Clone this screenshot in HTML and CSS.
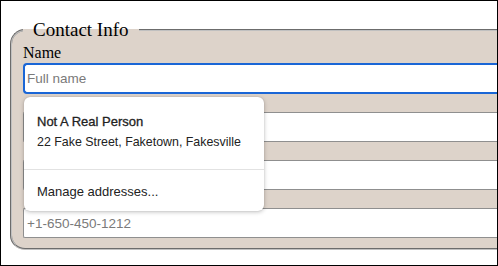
FILE: index.html
```html
<!DOCTYPE html>
<html>
<head>
<meta charset="utf-8">
<link rel="stylesheet" href="styles.css">
</head>
<body>
<div class="frame">
  <form class="form">
    <fieldset class="contact">
      <legend class="legend">Contact Info</legend>
      <label class="lbl" for="name">Name</label>
      <input class="field focused" id="name" type="text" placeholder="Full name">
      <input class="field gap" id="addr" type="text" aria-label="Address">
      <input class="field gap" id="email" type="text" aria-label="Email">
      <input class="field gap" id="phone" type="text" aria-label="Phone" placeholder="+1-650-450-1212">
    </fieldset>
  </form>
  <div class="menu">
    <div class="entry">
      <div class="entry-title">Not A Real Person</div>
      <div class="entry-sub">22 Fake Street, Faketown, Fakesville</div>
    </div>
    <div class="manage">Manage addresses...</div>
  </div>
</div>
</body>
</html>
```
FILE: styles.css
```css
html, body {
  margin: 0;
  padding: 0;
  background: #fff;
}
.frame {
  position: relative;
  width: 498px;
  height: 266px;
  box-sizing: border-box;
  border: 1px solid #000;
  overflow: hidden;
  background: #fff;
}
.form {
  margin: 0;
}
.contact {
  margin: 17px 0 0 9px;
  min-width: 0;
  padding: 5px 0 10px 11px;
  border: 2px groove #c0c0c0;
  border-right: 0;
  border-radius: 15px 0 0 15px;
  background: #ddd3ca;
  font-family: "Liberation Serif", serif;
  font-size: 16px;
}
.legend {
  font-family: "Liberation Serif", serif;
  font-size: 19px;
  line-height: 23px;
  padding: 0 10px;
  color: #000;
}
.lbl {
  display: block;
  height: 18px;
  line-height: 14px;
  font-family: "Liberation Serif", serif;
  font-size: 16px;
  color: #000;
}
.field {
  display: block;
  box-sizing: border-box;
  width: 100%;
  height: 30px;
  margin: 0;
  padding: 0 3px;
  border: 1px solid #8f8f8f;
  border-right: 0;
  border-radius: 2px 0 0 2px;
  background: #fff;
  font-family: "Liberation Sans", Arial, sans-serif;
  font-size: 13.5px;
  color: #000;
  outline: none;
}
.field.gap {
  margin-top: 18px;
}
.field::placeholder {
  color: #7a7a7a;
}
.field.focused {
  border: 2px solid #1a66d6;
  border-right: 0;
  border-radius: 4px 0 0 4px;
  padding: 0 2px;
  height: 31px;
  margin-top: -1px;
}
.menu {
  position: absolute;
  left: 23px;
  top: 96px;
  width: 240px;
  height: 114px;
  box-sizing: border-box;
  background: #fff;
  border-radius: 6px;
  box-shadow: 0 1px 4px rgba(0, 0, 0, 0.25), 0 0 1px rgba(0, 0, 0, 0.2);
  font-family: "Liberation Sans", Arial, sans-serif;
  color: #222;
  display: flex;
  flex-direction: column;
}
.entry {
  padding: 17px 13px 19px 13px;
  border-bottom: 1px solid #e2e2e2;
  display: flex;
  flex-direction: column;
  gap: 4px;
}
.entry-title {
  font-size: 13px;
  line-height: 16px;
  -webkit-text-stroke: 0.3px #222;
}
.entry-sub {
  font-size: 12.4px;
  line-height: 16px;
}
.manage {
  padding: 14px 13px 0 13px;
  font-size: 13px;
  line-height: 16px;
}
```
